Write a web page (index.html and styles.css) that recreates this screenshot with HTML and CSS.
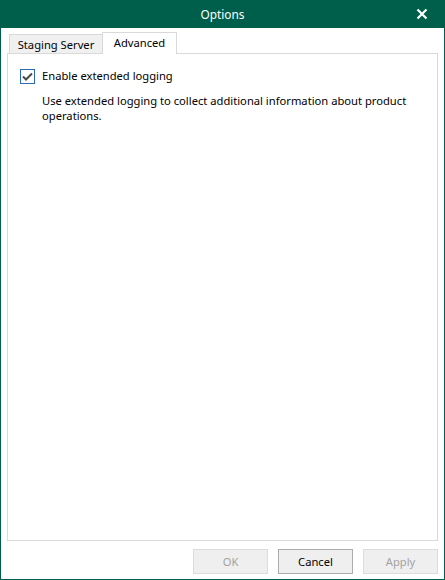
FILE: index.html
```html
<!DOCTYPE html>
<html>
<head>
<meta charset="utf-8">
<link rel="stylesheet" href="styles.css">
</head>
<body>
<div class="window">
  <div class="titlebar">
    <span class="title">Options</span>
    <span class="close">
      <svg width="12" height="12" viewBox="0 0 12 12"><path d="M1.5 1.5 L10.5 10.5 M10.5 1.5 L1.5 10.5" stroke="#fff" stroke-width="2.2" fill="none"/></svg>
    </span>
  </div>
  <div class="tabs">
    <div class="tab">Staging Server</div>
    <div class="tab active">Advanced</div>
  </div>
  <div class="panel">
    <label class="check-row">
      <span class="checkbox">
        <svg width="11" height="9" viewBox="0 0 11 9"><path d="M1 4.5 L4 7.5 L10 1.5" stroke="#4a4a4a" stroke-width="2" fill="none"/></svg>
      </span>
      <span class="check-label">Enable extended logging</span>
    </label>
    <p class="desc">Use extended logging to collect additional information about product operations.</p>
  </div>
  <div class="footer">
    <button class="btn disabled">OK</button>
    <button class="btn default">Cancel</button>
    <button class="btn disabled">Apply</button>
  </div>
</div>
</body>
</html>
```

FILE: styles.css
```css
html, body {
  margin: 0;
  padding: 0;
  background: #fff;
}
body {
  font-family: "Noto Sans", "Open Sans", sans-serif;
  font-size: 11.2px;
  color: #000;
}
.window {
  box-sizing: border-box;
  width: 445px;
  height: 580px;
  border: 1px solid #005f4b;
  border-top: none;
  display: flex;
  flex-direction: column;
  background: #fff;
}
.titlebar {
  height: 28px;
  flex: none;
  background: #005f4b;
  position: relative;
  display: flex;
  align-items: center;
  justify-content: center;
  color: #fff;
  font-size: 11.8px;
}
.title {
  margin-top: -1px;
}
.close {
  position: absolute;
  right: 16px;
  top: 8px;
  width: 12px;
  height: 12px;
  display: flex;
}
.tabs {
  height: 26px;
  flex: none;
  display: flex;
  align-items: flex-end;
  padding-left: 8px;
  margin-bottom: -1px;
}
.tab {
  box-sizing: border-box;
  height: 19px;
  margin-bottom: 1px;
  padding: 1px 0 0 0;
  width: 93px;
  background: #f0f0f0;
  border: 1px solid #d9d9d9;
  border-bottom: none;
  border-right: none;
  display: flex;
  align-items: center;
  justify-content: center;
  line-height: 16px;
  white-space: nowrap;
}
.tab.active {
  width: 75px;
  height: 22px;
  margin-bottom: 0;
  background: #fff;
  border-right: 1px solid #d9d9d9;
  position: relative;
  z-index: 1;
  padding: 0 0 1px 0;
}
.panel {
  flex: 1;
  margin: 0 6px;
  border: 1px solid #d9d9d9;
  padding: 14px 4px 0 12px;
}
.check-row {
  display: flex;
  align-items: center;
  gap: 7px;
  height: 16px;
}
.checkbox {
  box-sizing: border-box;
  width: 15px;
  height: 15px;
  border: 1px solid #2a6bb8;
  background: #fff;
  display: flex;
  align-items: center;
  justify-content: center;
}
.check-label {
  line-height: 16px;
}
.desc {
  margin: 9px 0 0 22px;
  line-height: 15px;
}
.footer {
  flex: none;
  display: flex;
  justify-content: flex-end;
  gap: 10px;
  padding: 8px 6px 5px 0;
}
.btn {
  box-sizing: border-box;
  width: 75px;
  height: 25px;
  font-family: "Noto Sans", "Open Sans", sans-serif;
  font-size: 11.2px;
  background: #efefef;
  border: 1px solid #adadad;
  padding: 0;
  color: #000;
}
.btn.disabled {
  border-color: #dcdcdc;
  color: #a3a3a3;
}
```
